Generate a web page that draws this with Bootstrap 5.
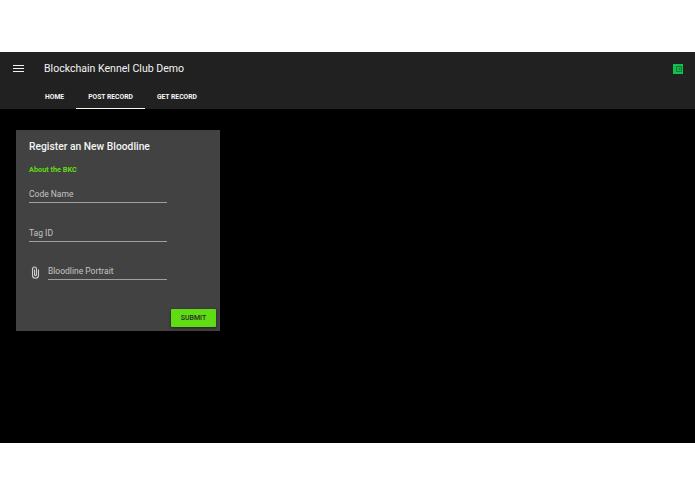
<!DOCTYPE html>
<html lang="en">
<head>
    <meta charset="UTF-8">
    <meta name="viewport" content="width=device-width, initial-scale=1.0">
    <title>Blockchain Kennel Club Demo</title>
    <link href="https://cdn.jsdelivr.net/npm/bootstrap@5.3.3/dist/css/bootstrap.min.css" rel="stylesheet">
    <style>
        body {
            background-color: #fff;
            font-family: Roboto, "Liberation Sans", sans-serif;
            padding: 52px 0 51px;
            height: 494px;
            overflow: hidden;
        }

        .app {
            background-color: #000;
            height: 391px;
        }

        /* App bar */
        .app-bar {
            background-color: #212121;
            height: 57px;
        }

        .bar-top {
            height: 33px;
            padding: 0 12px 0 13px;
        }

        .menu-icon {
            width: 10.5px;
            height: 7.5px;
            border-top: 1.2px solid #f2f2f2;
            border-bottom: 1.2px solid #f2f2f2;
            position: relative;
            margin-right: 20.5px;
        }

        .menu-icon::after {
            content: "";
            position: absolute;
            left: 0;
            right: 0;
            top: 1.9px;
            height: 1.2px;
            background-color: #f2f2f2;
        }

        .bar-title {
            color: #f4f4f4;
            font-size: 10.55px;
        }

        .tabs {
            padding-left: 33px;
            height: 24px;
        }

        .tab {
            color: #f4f4f4;
            font-size: 6.75px;
            font-weight: 700;
            text-transform: uppercase;
            text-decoration: none;
            line-height: 25px;
            padding: 0 12px;
            border-bottom: 1.5px solid transparent;
            height: 24px;
        }

        .tab.active {
            border-bottom-color: #f4f4f4;
        }

        /* Form card */
        .form-card {
            width: 204px;
            height: 201px;
            margin: 21px 0 0 16px;
            background-color: #424242;
            border: 0;
            border-radius: 0;
            padding: 10px 13px 0;
            position: relative;
        }

        .form-title {
            color: #f4f4f4;
            font-size: 10.3px;
            font-weight: 500;
            line-height: 14px;
            margin: 0 0 11px;
        }

        .about-link {
            color: #5fdc14;
            font-size: 7.3px;
            font-weight: 700;
            text-decoration: none;
            line-height: 10px;
            display: block;
            margin-bottom: 12px;
        }

        .field {
            width: 138px;
            height: 16px;
            color: #c4c4c4;
            font-size: 8.5px;
            line-height: 14px;
            border-bottom: 1px solid #a0a0a0;
            margin-bottom: 22.5px;
        }

        .file-row {
            width: 138px;
            padding-left: 2px;
        }

        .file-row .field {
            width: 119px;
            margin-bottom: 0;
        }

        .submit-btn {
            position: absolute;
            right: 4px;
            bottom: 4px;
            width: 45px;
            height: 18px;
            padding: 0;
            background-color: #5fdc14;
            border: 0;
            border-radius: 1px;
            color: #2a2a2a;
            font-size: 7px;
            font-weight: 500;
            box-shadow: 0 1px 3px rgba(0, 0, 0, .5);
        }
    </style>
</head>
<body>
    <div class="app">
        <header class="app-bar">
            <div class="bar-top d-flex align-items-center">
                <span class="menu-icon"></span>
                <span class="bar-title flex-grow-1">Blockchain Kennel Club Demo</span>
                <svg width="10" height="10" viewBox="0 0 10 10">
                    <rect width="10" height="10" fill="#13c04f"/>
                    <path d="M3.5 2.5h5v5h-5z" fill="none" stroke="#0d7a38" stroke-width="1"/>
                    <rect x="5.5" y="4.2" width="2" height="1.6" fill="#0d7a38"/>
                </svg>
            </div>
            <nav class="tabs d-flex">
                <a class="tab" href="#">Home</a>
                <a class="tab active" href="#">Post Record</a>
                <a class="tab" href="#">Get Record</a>
            </nav>
        </header>

        <form class="card form-card">
            <h2 class="form-title">Register an New Bloodline</h2>
            <a class="about-link" href="#">About the BKC</a>
            <div class="field">Code Name</div>
            <div class="field">Tag ID</div>
            <div class="file-row d-flex align-items-center justify-content-between">
                <svg width="9" height="13" viewBox="0 0 9 13">
                    <path d="M7.5 3.5v5.7a3 3 0 0 1-6 0V3a2 2 0 0 1 4 0v5.6a1 1 0 0 1-2 0V3.5" fill="none" stroke="#d0d0d0" stroke-width="1.1"/>
                </svg>
                <div class="field">Bloodline Portrait</div>
            </div>
            <button class="btn submit-btn" type="button">SUBMIT</button>
        </form>
    </div>
    <script src="https://cdn.jsdelivr.net/npm/bootstrap@5.3.3/dist/js/bootstrap.bundle.min.js"></script>
</body>
</html>
